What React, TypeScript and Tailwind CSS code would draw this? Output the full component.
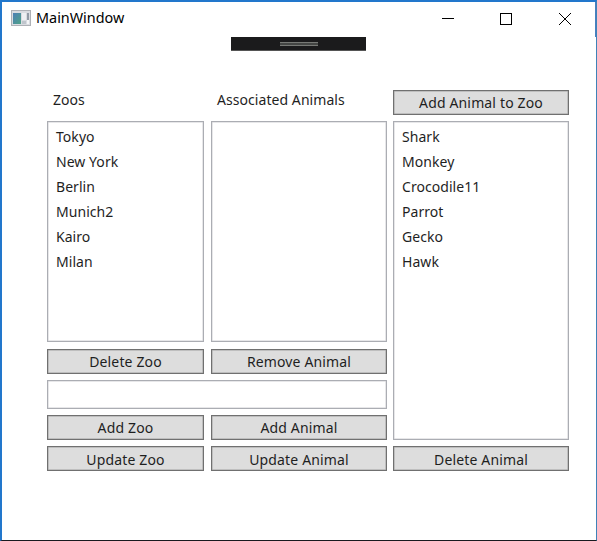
import type { ReactNode } from "react";

const zoos = ["Tokyo", "New York", "Berlin", "Munich2", "Kairo", "Milan"];
const animals = ["Shark", "Monkey", "Crocodile11", "Parrot", "Gecko", "Hawk"];

function Button({ children, className = "" }: { children: ReactNode; className?: string }) {
  return (
    <button
      className={`flex h-[25px] w-full items-center justify-center border border-[#707070] bg-[#dddddd] leading-[23px] tracking-[0.15px] whitespace-nowrap shadow-[inset_0_0_0_0.5px_#a0a0a0] ${className}`}
    >
      {children}
    </button>
  );
}

function ListBox({ items = [], className = "" }: { items?: string[]; className?: string }) {
  return (
    <ul className={`border border-[#abadb3] bg-white pt-[2px] pl-2 shadow-[inset_0_0_0_0.5px_#d0d0d4] ${className}`}>
      {items.map((item) => (
        <li key={item} className="h-[25px] leading-[25px] tracking-[0.05px]">
          {item}
        </li>
      ))}
    </ul>
  );
}

function WindowIcon() {
  return (
    <svg width="20" height="16" viewBox="0 0 20 16" shapeRendering="crispEdges">
      <defs>
        <linearGradient id="pane" x1="0" y1="0" x2="1" y2="1">
          <stop offset="0" stopColor="#4c7fb5" />
          <stop offset="1" stopColor="#4fa287" />
        </linearGradient>
      </defs>
      <rect width="20" height="16" fill="#aeb1b6" />
      <rect x="1" y="1" width="18" height="14" fill="#d9dce1" />
      <rect x="2" y="3" width="8" height="11" fill="url(#pane)" />
      <rect x="11" y="3" width="4" height="7" fill="#eef0f3" />
      <rect x="11" y="11" width="4" height="3" fill="#bfc5cc" />
      <rect x="16" y="3" width="2" height="7" fill="#929ba6" />
      <rect x="16" y="10" width="2" height="4" fill="#f4f5f7" />
    </svg>
  );
}

export default function App() {
  return (
    <div className="relative flex h-[541px] w-[597px] flex-col overflow-hidden border-t-2 border-r border-b border-l-2 border-t-[#2277cc] border-r-[#3f82b8] border-b-[#181a1f] border-l-[#2277cc] bg-white font-['Noto_Sans',sans-serif] text-[14px] text-[#1f1f1f]">
      <header className="flex h-[35px] shrink-0 items-start border-r border-[#4a7fc0] pl-[9px] text-black">
        <div className="mt-2">
          <WindowIcon />
        </div>
        <h1 className="mt-[6px] ml-[5px] grow text-[14.4px] leading-5">MainWindow</h1>
        <svg className="mt-[11px] mr-[22px] shrink-0" width="132" height="13" viewBox="0 0 132 13" fill="none" stroke="#000">
          <path d="M1 5.5h12" />
          <rect x="59.5" y="0.5" width="11" height="11" />
          <path d="M118 0l12 12M130 0l-12 12" />
        </svg>
      </header>

      <div className="ml-[229px] flex h-[14px] w-[135px] shrink-0 items-center justify-center border-b border-[#555] bg-[#1b1b1c]">
        <div className="h-[4px] w-[38px] border-y border-[#777975] bg-[#444644]" />
      </div>

      <main className="mt-[39px] ml-[45px] flex">
        <div className="w-[340px]">
          <div className="grid grid-cols-[157px_176px] gap-x-[7px]">
            <span className="h-[31px] pl-[6px] leading-5">Zoos</span>
            <span className="h-[31px] pl-[6px] leading-5 tracking-[0.06px]">Associated Animals</span>
            <ListBox items={zoos} className="h-[221px]" />
            <ListBox className="h-[221px]" />
            <Button className="mt-[7px]">Delete Zoo</Button>
            <Button className="mt-[7px]">Remove Animal</Button>
            <input className="col-span-2 mt-[6px] h-[29px] border border-[#abadb3] bg-white px-1 shadow-[inset_0_0_0_0.5px_#d0d0d4] outline-none" />
            <Button className="mt-[6px]">Add Zoo</Button>
            <Button className="mt-[6px]">Add Animal</Button>
            <Button className="mt-[6px] pt-[2px]">Update Zoo</Button>
            <Button className="mt-[6px] pt-[2px]">Update Animal</Button>
          </div>
        </div>
        <div className="ml-[6px] w-[176px]">
          <Button>Add Animal to Zoo</Button>
          <ListBox items={animals} className="mt-[6px] h-[319px]" />
          <Button className="mt-[6px] pt-[2px]">Delete Animal</Button>
        </div>
      </main>
    </div>
  );
}
